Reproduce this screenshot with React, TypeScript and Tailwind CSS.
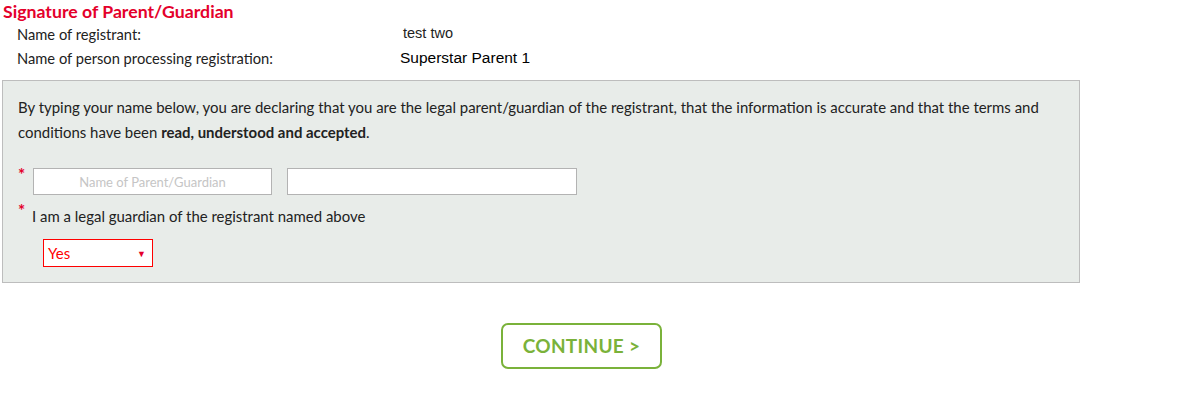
export default function App() {
  return (
    <div className="w-[1202px] h-[403px] bg-white font-['Lato','Open_Sans',sans-serif] text-[#222]">
      <h2 className="pl-[3px] pt-[2px] text-[17.7px] leading-[20px] font-bold text-[#e4002b]">
        Signature of Parent/Guardian
      </h2>
      <div className="pl-[17px] text-[14.7px]">
        <div className="flex h-[24px] items-center">
          <span className="w-[386px]">Name of registrant:</span>
          <span className="font-['Liberation_Sans',Arial,sans-serif] text-[14.5px]">test two</span>
        </div>
        <div className="flex h-[24px] items-center">
          <span className="w-[383px]">Name of person processing registration:</span>
          <span className="font-['Liberation_Sans',Arial,sans-serif] text-[15.5px] text-black">Superstar Parent 1</span>
        </div>
      </div>

      <div className="ml-[2px] mt-[10px] w-[1078px] h-[203px] border border-[#bdbdbd] bg-[#e8ece9] px-[15px] pt-[14px]">
        <p className="text-[14.95px] leading-[25px]">
          By typing your name below, you are declaring that you are the legal parent/guardian of the registrant, that the
          information is accurate and that the terms and conditions have been{" "}
          <span className="font-bold">read, understood and accepted</span>.
        </p>

        <div className="mt-[23px] flex items-start">
          <span className="w-[15px] text-[#e4002b] text-[17px] leading-[14px] font-bold">*</span>
          <input
            placeholder="Name of Parent/Guardian"
            className="w-[239px] h-[27px] bg-white border border-[#b3b3b3] text-center text-[13px] placeholder:text-[#c5c5c5] outline-none"
          />
          <input className="ml-[15px] w-[290px] h-[27px] bg-white border border-[#b3b3b3] outline-none" />
        </div>

        <div className="mt-[9px] flex items-start">
          <span className="w-[14px] text-[#e4002b] text-[17px] leading-[14px] font-bold">*</span>
          <span className="mt-[1px] text-[14.95px]">I am a legal guardian of the registrant named above</span>
        </div>

        <div className="mt-[12px] ml-[25px] w-[110px] h-[28px] border border-[#ff0000] bg-white flex items-center justify-between pl-[4px] pr-[6px]">
          <span className="text-[15px] text-[#ff0000] leading-[18px] -mt-[1px]">Yes</span>
          <span className="text-[9px] text-[#e4002b]">▼</span>
        </div>
      </div>

      <div className="mt-[40px] ml-[501px]">
        <button className="w-[161px] h-[46px] rounded-[7px] border-2 border-[#7ab23a] text-[#7ab23a] text-[19px] font-bold tracking-[0.3px]">
          CONTINUE &gt;
        </button>
      </div>
    </div>
  );
}
